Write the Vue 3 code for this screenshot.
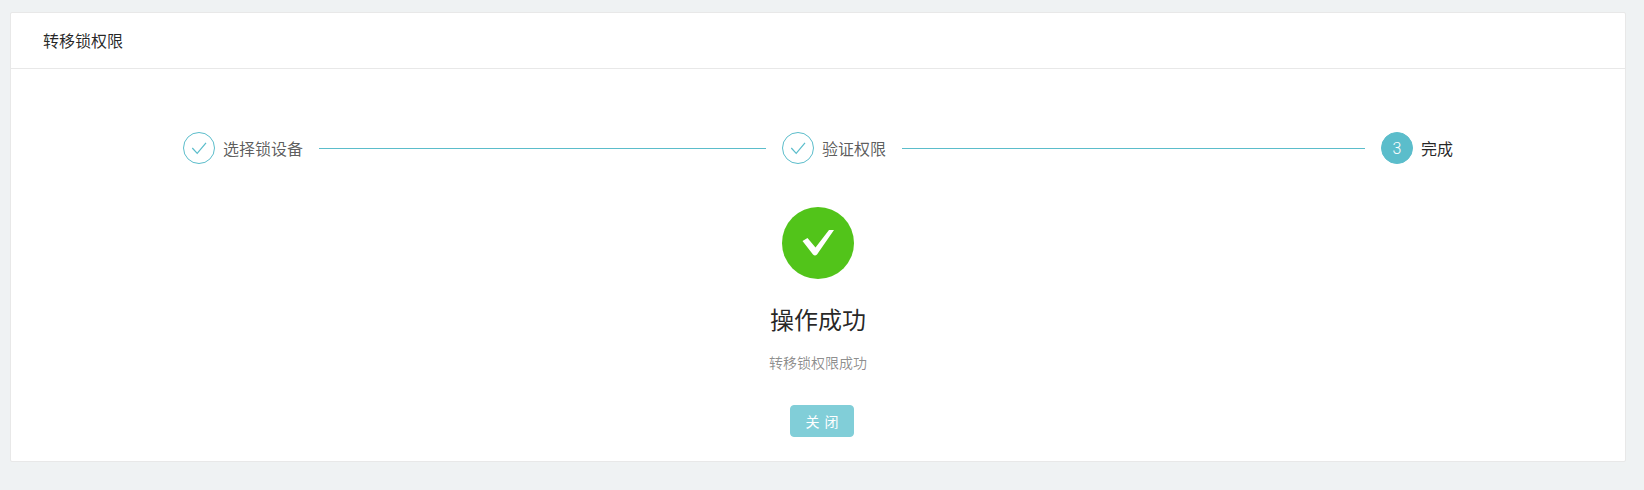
<script setup>
const steps = [
  { title: '选择锁设备', done: true },
  { title: '验证权限', done: true },
  { title: '完成', done: false, num: 3 }
]
</script>

<template>
  <div class="page">
    <section class="card">
      <header class="card-head">转移锁权限</header>
      <div class="card-body">
        <div class="steps">
          <div v-for="s in steps" :key="s.title" class="step" :class="{ last: !s.done }">
            <span class="step-icon" :class="{ active: !s.done }">
              <svg v-if="s.done" width="16" height="16" viewBox="0 0 16 16" fill="none">
                <path d="M1.3 8 L6.2 13.3 L15 2.8" stroke="#5bbdcb" stroke-width="1.25" />
              </svg>
              <template v-else>{{ s.num }}</template>
            </span>
            <span class="step-title" :class="{ current: !s.done }">{{ s.title }}</span>
            <span v-if="s.done" class="step-line"></span>
          </div>
        </div>
        <div class="result">
          <div class="result-icon">
            <svg width="32" height="26" viewBox="0 0 32 26" fill="none">
              <path d="M0.5 11 L5.500 8 L13.500 17.500 L27 0 L32 0 L15 24.500 Q13 26.500 11 24.500 Z" fill="#fff" />
            </svg>
          </div>
          <h2 class="result-title">操作成功</h2>
          <p class="result-desc">转移锁权限成功</p>
          <button class="close-btn" type="button">关 闭</button>
        </div>
      </div>
    </section>
  </div>
</template>

<style>
html, body { margin: 0; background: #eff2f3; }
</style>

<style scoped>
.page {
  height: 490px;
  box-sizing: border-box;
  padding: 12px 18px 28px 10px;
  background: #eff2f3;
  font-family: "Noto Sans CJK SC", "Liberation Sans", sans-serif;
}
.card {
  height: 450px;
  box-sizing: border-box;
  background: #fff;
  border: 1px solid #e8e8e8;
  border-radius: 2px;
  display: flex;
  flex-direction: column;
}
.card-head {
  height: 56px;
  box-sizing: border-box;
  flex: none;
  padding: 0 32px;
  border-bottom: 1px solid #e8e8e8;
  font-size: 16px;
  line-height: 55px;
  color: rgba(0, 0, 0, 0.85);
}
.card-body {
  flex: 1;
  display: flex;
  flex-direction: column;
  align-items: center;
  padding-top: 63px;
}
.steps {
  width: 1270px;
  display: flex;
}
.step {
  flex: 1;
  display: flex;
  align-items: center;
  height: 32px;
  padding-right: 16px;
}
.step.last { flex: none; padding-right: 0; }
.step-icon {
  width: 32px;
  height: 32px;
  box-sizing: border-box;
  flex: none;
  border-radius: 50%;
  border: 1px solid #5bbdcb;
  display: flex;
  align-items: center;
  justify-content: center;
  font-family: "Roboto", "Liberation Sans", sans-serif;
  font-weight: 300;
  font-size: 16px;
  color: #fff;
}
.step-icon.active { background: #5bbdcb; }
.step-title {
  margin-left: 8px;
  font-size: 16px;
  line-height: 34px;
  color: rgba(0, 0, 0, 0.65);
  white-space: nowrap;
}
.step-title.current { color: rgba(0, 0, 0, 0.85); }
.step-line {
  flex: 1;
  height: 1px;
  margin-left: 16px;
  background: #5bbdcb;
}
.result {
  display: flex;
  flex-direction: column;
  align-items: center;
  margin-top: 43px;
}
.result-icon {
  width: 72px;
  height: 72px;
  border-radius: 50%;
  background: #52c41a;
  display: flex;
  align-items: center;
  justify-content: center;
}
.result-title {
  margin: 24px 0 0;
  font-size: 24px;
  font-weight: 400;
  line-height: 32px;
  color: rgba(0, 0, 0, 0.85);
}
.result-desc {
  margin: 16px 0 0;
  font-size: 14px;
  line-height: 22px;
  color: rgba(0, 0, 0, 0.45);
}
.close-btn {
  margin: 32px 0 0 8px;
  width: 64px;
  height: 32px;
  padding: 0;
  border: 1px solid #81ced8;
  border-radius: 4px;
  background: #81ced8;
  color: #fff;
  font: inherit;
  font-size: 14px;
  word-spacing: 2px;
}
</style>
